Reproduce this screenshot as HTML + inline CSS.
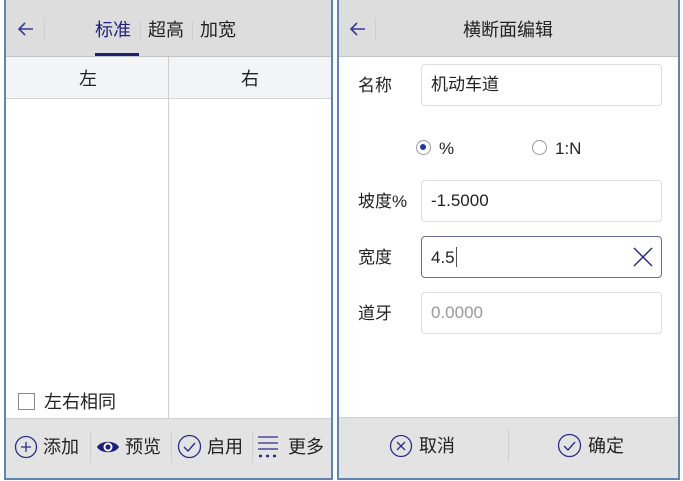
<!DOCTYPE html>
<html><head><meta charset="utf-8"><style>
*{margin:0;padding:0;box-sizing:border-box}
body{width:683px;height:481px;background:#fff;position:relative;overflow:hidden;font-family:"Liberation Sans","Noto Sans CJK SC",sans-serif;color:#222}
.p{position:absolute;top:-2px;height:482px;border:2.5px solid #5f84ad;background:#fff;overflow:hidden}
.hd{position:absolute;left:0;right:0;top:0;height:57px;background:#dcdddc;border-bottom:1px solid #c4c4c4}
.ab{position:absolute}
.ft{position:absolute;left:0;right:0;bottom:0;height:60px;background:#e3e3e4;border-top:1px solid #cfcfcf}
.t{position:absolute;font-size:18px;line-height:22px;white-space:nowrap}
.box{position:absolute;left:82px;width:241px;height:42px;border:1px solid #dedede;border-radius:4px;background:#fff}
.box span{position:absolute;left:9px;top:10px;font-size:17px;line-height:20px}
.sep{position:absolute;width:1px;background:#cfcfcf}
</style></head><body>
<div class="p" style="left:4px;width:329px">
 <div class="hd">
  <svg class="ab" style="left:11px;top:20px" width="18" height="18" viewBox="0 0 18 18"><path d="M16 9H2M8 3L2 9l6 6" stroke="#3a3a8f" stroke-width="1.6" fill="none"/></svg>
  <div class="sep" style="left:38px;top:18px;height:22px"></div>
  <div class="t" style="left:89px;top:19px;color:#1f1f7a">标准</div>
  <div class="sep" style="left:134px;top:20px;height:20px"></div>
  <div class="t" style="left:142px;top:19px">超高</div>
  <div class="sep" style="left:186px;top:20px;height:20px"></div>
  <div class="t" style="left:194px;top:19px">加宽</div>
  <div class="ab" style="left:89px;top:53px;width:44px;height:3px;background:#1f1f7a"></div>
 </div>
 <div class="ab" style="left:0;right:0;top:57px;height:42px;background:#f3f4f6;border-bottom:1px solid #d6d6d6"></div>
 <div class="ab" style="left:162px;top:57px;width:1px;height:363px;background:#cfcfcf"></div>
 <div class="t" style="left:73px;top:68px">左</div>
 <div class="t" style="left:235px;top:68px">右</div>
 <div class="ab" style="left:12px;top:393px;width:17px;height:17px;border:1px solid #888;background:#fff"></div>
 <div class="t" style="left:38px;top:391px">左右相同</div>
 <div class="ft">
  <svg class="ab" style="left:8px;top:16px" width="24" height="24" viewBox="0 0 24 24"><circle cx="12" cy="12" r="10.5" stroke="#2c2c86" stroke-width="1.3" fill="none"/><path d="M12 7v10M7 12h10" stroke="#2c2c86" stroke-width="1.3"/></svg>
  <div class="t" style="left:37px;top:17px">添加</div>
  <div class="sep" style="left:84px;top:12px;height:32px"></div>
  <svg class="ab" style="left:90px;top:19px" width="24" height="18" viewBox="0 0 24 18"><path d="M1 9C5 2 19 2 23 9 19 16 5 16 1 9z" fill="#1f1f7a"/><circle cx="12" cy="9" r="4.5" fill="#fff"/><circle cx="12" cy="9" r="2.6" fill="#1f1f7a"/></svg>
  <div class="t" style="left:119px;top:17px">预览</div>
  <div class="sep" style="left:165px;top:12px;height:32px"></div>
  <svg class="ab" style="left:171px;top:15px" width="25" height="25" viewBox="0 0 25 25"><circle cx="12.5" cy="12.5" r="11" stroke="#2c2c86" stroke-width="1.3" fill="none"/><path d="M7 13l4 4 7-8" stroke="#2c2c86" stroke-width="1.4" fill="none"/></svg>
  <div class="t" style="left:201px;top:17px">启用</div>
  <div class="sep" style="left:246px;top:12px;height:32px"></div>
  <svg class="ab" style="left:251px;top:16px" width="22" height="24" viewBox="0 0 22 24"><path d="M1 2h20M1 8h20M1 14h20" stroke="#2c2c86" stroke-width="1.3"/><path d="M2 21h3M9 21h3M16 21h3" stroke="#2c2c86" stroke-width="2.5"/></svg>
  <div class="t" style="left:282px;top:17px">更多</div>
 </div>
</div>
<div class="p" style="left:337px;width:343px">
 <div class="hd">
  <svg class="ab" style="left:10px;top:20px" width="18" height="18" viewBox="0 0 18 18"><path d="M16 9H2M8 3L2 9l6 6" stroke="#3a3a8f" stroke-width="1.6" fill="none"/></svg>
  <div class="sep" style="left:36px;top:18px;height:22px"></div>
  <div class="t" style="left:124px;top:19px">横断面编辑</div>
 </div>
 <div class="t" style="left:19px;top:75px;font-size:17px">名称</div>
 <div class="box" style="top:64px"><span>机动车道</span></div>
 <div class="ab" style="left:77px;top:140px;width:15px;height:15px;border:1.5px solid #999;border-radius:50%;background:#fff"><div style="position:absolute;left:3px;top:3px;width:6px;height:6px;border-radius:50%;background:#1f3a9a"></div></div>
 <div class="t" style="left:100px;top:138px;font-size:17px">%</div>
 <div class="ab" style="left:193px;top:140px;width:15px;height:15px;border:1.5px solid #999;border-radius:50%;background:#fff"></div>
 <div class="t" style="left:216px;top:138px;font-size:17px">1:N</div>
 <div class="t" style="left:19px;top:191px;font-size:17px">坡度%</div>
 <div class="box" style="top:180px"><span>-1.5000</span></div>
 <div class="t" style="left:19px;top:247px;font-size:17px">宽度</div>
 <div class="box" style="top:236px;border-color:#6a6a9a"><span>4.5<b style="display:inline-block;width:1px;height:20px;background:#555;vertical-align:-4px;margin-left:1px"></b></span>
  <svg class="ab" style="left:211px;top:10px" width="20" height="20" viewBox="0 0 20 20"><path d="M1 1l18 18M19 1L1 19" stroke="#2c2c86" stroke-width="1.5"/></svg></div>
 <div class="t" style="left:19px;top:303px;font-size:17px">道牙</div>
 <div class="box" style="top:292px"><span style="color:#999">0.0000</span></div>
 <div class="ft" style="height:61px">
  <svg class="ab" style="left:50px;top:16px" width="24" height="24" viewBox="0 0 24 24"><circle cx="12" cy="12" r="10.5" stroke="#2c2c86" stroke-width="1.3" fill="none"/><path d="M8 8l8 8M16 8l-8 8" stroke="#2c2c86" stroke-width="1.3"/></svg>
  <div class="t" style="left:80px;top:17px">取消</div>
  <div class="sep" style="left:169px;top:12px;height:32px"></div>
  <svg class="ab" style="left:218px;top:15px" width="25" height="25" viewBox="0 0 25 25"><circle cx="12.5" cy="12.5" r="11" stroke="#2c2c86" stroke-width="1.3" fill="none"/><path d="M7 13l4 4 7-8" stroke="#2c2c86" stroke-width="1.4" fill="none"/></svg>
  <div class="t" style="left:249px;top:17px">确定</div>
 </div>
</div>
</body></html>
